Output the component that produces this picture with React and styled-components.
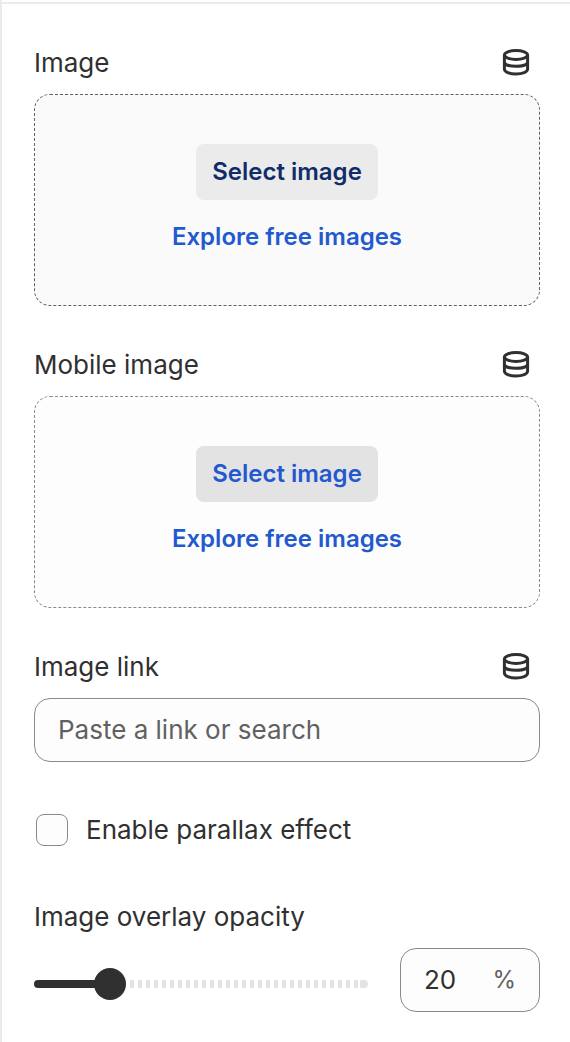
import React, { useState } from "react";
import styled, { createGlobalStyle } from "styled-components";

const GlobalStyle = createGlobalStyle`
  * {
    box-sizing: border-box;
  }

  body {
    margin: 0;
    background: #fff;
    color: #303030;
    font-family: Inter, "Liberation Sans", sans-serif;
    font-size: 26px;
    line-height: 42px;
  }

  button,
  input {
    font: inherit;
    color: inherit;
  }
`;

const Page = styled.div`
  min-height: 100vh;
  padding-top: 2px;
  border-left: 2px solid #ebebeb;
`;

const Panel = styled.form`
  display: flex;
  flex-direction: column;
  gap: 38px;
  padding: 38px 30px 30px 32px;
  border-top: 2px solid #ebebeb;
`;

const Field = styled.div`
  display: flex;
  flex-direction: column;
  gap: 10px;
`;

const FieldHeader = styled.div`
  display: flex;
  align-items: center;
  justify-content: space-between;
  padding-right: 8px;
`;

const SourceButton = styled.button`
  display: flex;
  padding: 0;
  border: 0;
  background: none;
  cursor: pointer;
`;

const DropArea = styled.div`
  display: flex;
  flex-direction: column;
  align-items: center;
  gap: 16px;
  padding: 49px 16px 47px;
  border: 1px dashed ${(props) => (props.$hovered ? "#616161" : "#8a8a8a")};
  border-radius: 16px;
  background: ${(props) => (props.$hovered ? "#fafafa" : "#fdfdfd")};
  font-size: 24px;
  font-weight: 600;
`;

const SelectButton = styled.button`
  height: 56px;
  padding: 0 16px;
  border: 0;
  border-radius: 8px;
  background: ${(props) => (props.$hovered ? "#ebebeb" : "#e3e3e3")};
  color: ${(props) => (props.$hovered ? "#102d69" : "#2359cf")};
  cursor: pointer;
`;

const ExploreLink = styled.a`
  color: #2359cf;
  text-decoration: none;
`;

const TextInput = styled.input`
  width: 100%;
  height: 64px;
  padding: 0 23px 2px;
  border: 1px solid #8a8a8a;
  border-radius: 16px;
  background: #fdfdfd;

  &::placeholder {
    color: #616161;
    opacity: 1;
  }
`;

const CheckRow = styled.label`
  display: flex;
  align-items: center;
  gap: 18px;
  padding: 9px 2px 7px;
`;

const Checkbox = styled.input`
  appearance: none;
  width: 32px;
  height: 32px;
  margin: 0;
  border: 1px solid #8a8a8a;
  border-radius: 8px;
  background: #fdfdfd;

  &:checked {
    background: #303030;
  }
`;

const RangeRow = styled.div`
  display: flex;
  align-items: center;
  gap: 32px;
`;

const Slider = styled.input`
  appearance: none;
  flex: 1;
  min-width: 0;
  height: 32px;
  margin: 8px 0 0;
  background: none;

  &::-webkit-slider-runnable-track {
    height: 8px;
    border-radius: 4px;
    background:
      linear-gradient(#303030, #303030) 0 0 / var(--filled) 100% no-repeat,
      linear-gradient(#e3e3e3, #e3e3e3) 100% 0 / 8px 100% no-repeat,
      repeating-linear-gradient(90deg, #e3e3e3 0 4px, transparent 4px 8px);
  }

  &::-webkit-slider-thumb {
    appearance: none;
    width: 32px;
    height: 32px;
    margin-top: -12px;
    border-radius: 50%;
    background: #303030;
  }
`;

const PercentBox = styled.div`
  display: flex;
  align-items: center;
  justify-content: space-between;
  width: 140px;
  height: 64px;
  padding: 0 23px;
  border: 1px solid #8a8a8a;
  border-radius: 16px;
  background: #fdfdfd;
`;

const PercentInput = styled.input`
  width: 56px;
  padding: 0;
  border: 0;
  background: none;
  appearance: textfield;

  &::-webkit-inner-spin-button {
    appearance: none;
  }
`;

const Unit = styled.span`
  color: #616161;
  font-size: 24px;
`;

function DatabaseIcon() {
  return (
    <svg width="32" height="32" viewBox="0 1 32 32" fill="none" stroke="#303030" strokeWidth="3" aria-hidden="true">
      <ellipse cx="16" cy="9" rx="11.6" ry="4.4" />
      <path d="M4.4 9v14c0 3 5.1 5 11.6 5s11.6-2 11.6-5V9" />
      <path d="M4.4 16c0 2.7 5.1 4.3 11.6 4.3s11.6-1.6 11.6-4.3" />
    </svg>
  );
}

function Header(props) {
  return (
    <FieldHeader>
      {props.htmlFor ? <label htmlFor={props.htmlFor}>{props.title}</label> : <span>{props.title}</span>}
      <SourceButton type="button" aria-label="Connect dynamic source">
        <DatabaseIcon />
      </SourceButton>
    </FieldHeader>
  );
}

function ImagePicker(props) {
  return (
    <Field role="group" aria-label={props.title}>
      <Header title={props.title} />
      <DropArea $hovered={props.hovered}>
        <SelectButton type="button" $hovered={props.hovered}>
          Select image
        </SelectButton>
        <ExploreLink href="#images">Explore free images</ExploreLink>
      </DropArea>
    </Field>
  );
}

function App() {
  const [parallax, setParallax] = useState(false);
  const [opacity, setOpacity] = useState(20);

  // the thumb is 32px wide, so its centre travels from 16px to 100% - 16px
  const filled = `calc(16px + (100% - 32px) * ${opacity / 100})`;

  return (
    <>
      <GlobalStyle />
      <Page>
        <Panel>
          <ImagePicker title="Image" hovered />
          <ImagePicker title="Mobile image" />

          <Field>
            <Header title="Image link" htmlFor="link" />
            <TextInput id="link" type="text" placeholder="Paste a link or search" />
          </Field>

          <CheckRow>
            <Checkbox type="checkbox" checked={parallax} onChange={(e) => setParallax(e.target.checked)} />
            Enable parallax effect
          </CheckRow>

          <Field>
            <label htmlFor="opacity">Image overlay opacity</label>
            <RangeRow>
              <Slider
                id="opacity"
                type="range"
                min="0"
                max="100"
                value={opacity}
                style={{ "--filled": filled }}
                onChange={(e) => setOpacity(Number(e.target.value))}
              />
              <PercentBox>
                <PercentInput
                  type="number"
                  aria-label="Image overlay opacity percent"
                  min="0"
                  max="100"
                  value={opacity}
                  onChange={(e) => setOpacity(Number(e.target.value))}
                />
                <Unit>%</Unit>
              </PercentBox>
            </RangeRow>
          </Field>
        </Panel>
      </Page>
    </>
  );
}

export default App;
